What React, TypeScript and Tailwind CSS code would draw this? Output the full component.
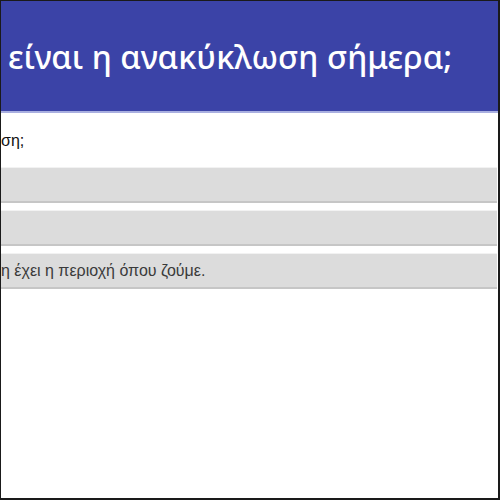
export default function App() {
  return (
    <div className="w-[500px] h-[500px] overflow-hidden bg-white border-l border-t border-r-2 border-b-2 border-[#1a1a1a] flex flex-col" style={{ fontFamily: '"Liberation Sans", Arial, sans-serif' }}>
      <div className="h-[110px] bg-[#3b43a7] flex items-center pl-[7px] pt-[2px] shrink-0">
        <h1 className="text-white text-[32.5px] font-medium leading-none whitespace-nowrap" style={{ fontFamily: '"Noto Sans", sans-serif' }}>
          είναι η ανακύκλωση σήμερα;
        </h1>
      </div>
      <div className="h-[2px] bg-[#a9afe0] shrink-0" />
      <div className="pt-[20px] text-[16px] leading-none text-[#111] whitespace-nowrap">ση;</div>
      <div className="mt-[18px] flex flex-col gap-[7px] pr-[1px]">
        <div className="h-[36px] bg-[#dcdcdc] border-b-2 border-[#c6c6c6] border-t border-t-[#f2f2f2]" />
        <div className="h-[36px] bg-[#dcdcdc] border-b-2 border-[#c6c6c6] border-t border-t-[#f2f2f2]" />
        <div className="h-[36px] bg-[#dcdcdc] border-b-2 border-[#c6c6c6] border-t border-t-[#f2f2f2] flex items-center">
          <span className="text-[16px] text-[#3a3a3a] whitespace-nowrap">η έχει η περιοχή όπου ζούμε.</span>
        </div>
      </div>
    </div>
  );
}
